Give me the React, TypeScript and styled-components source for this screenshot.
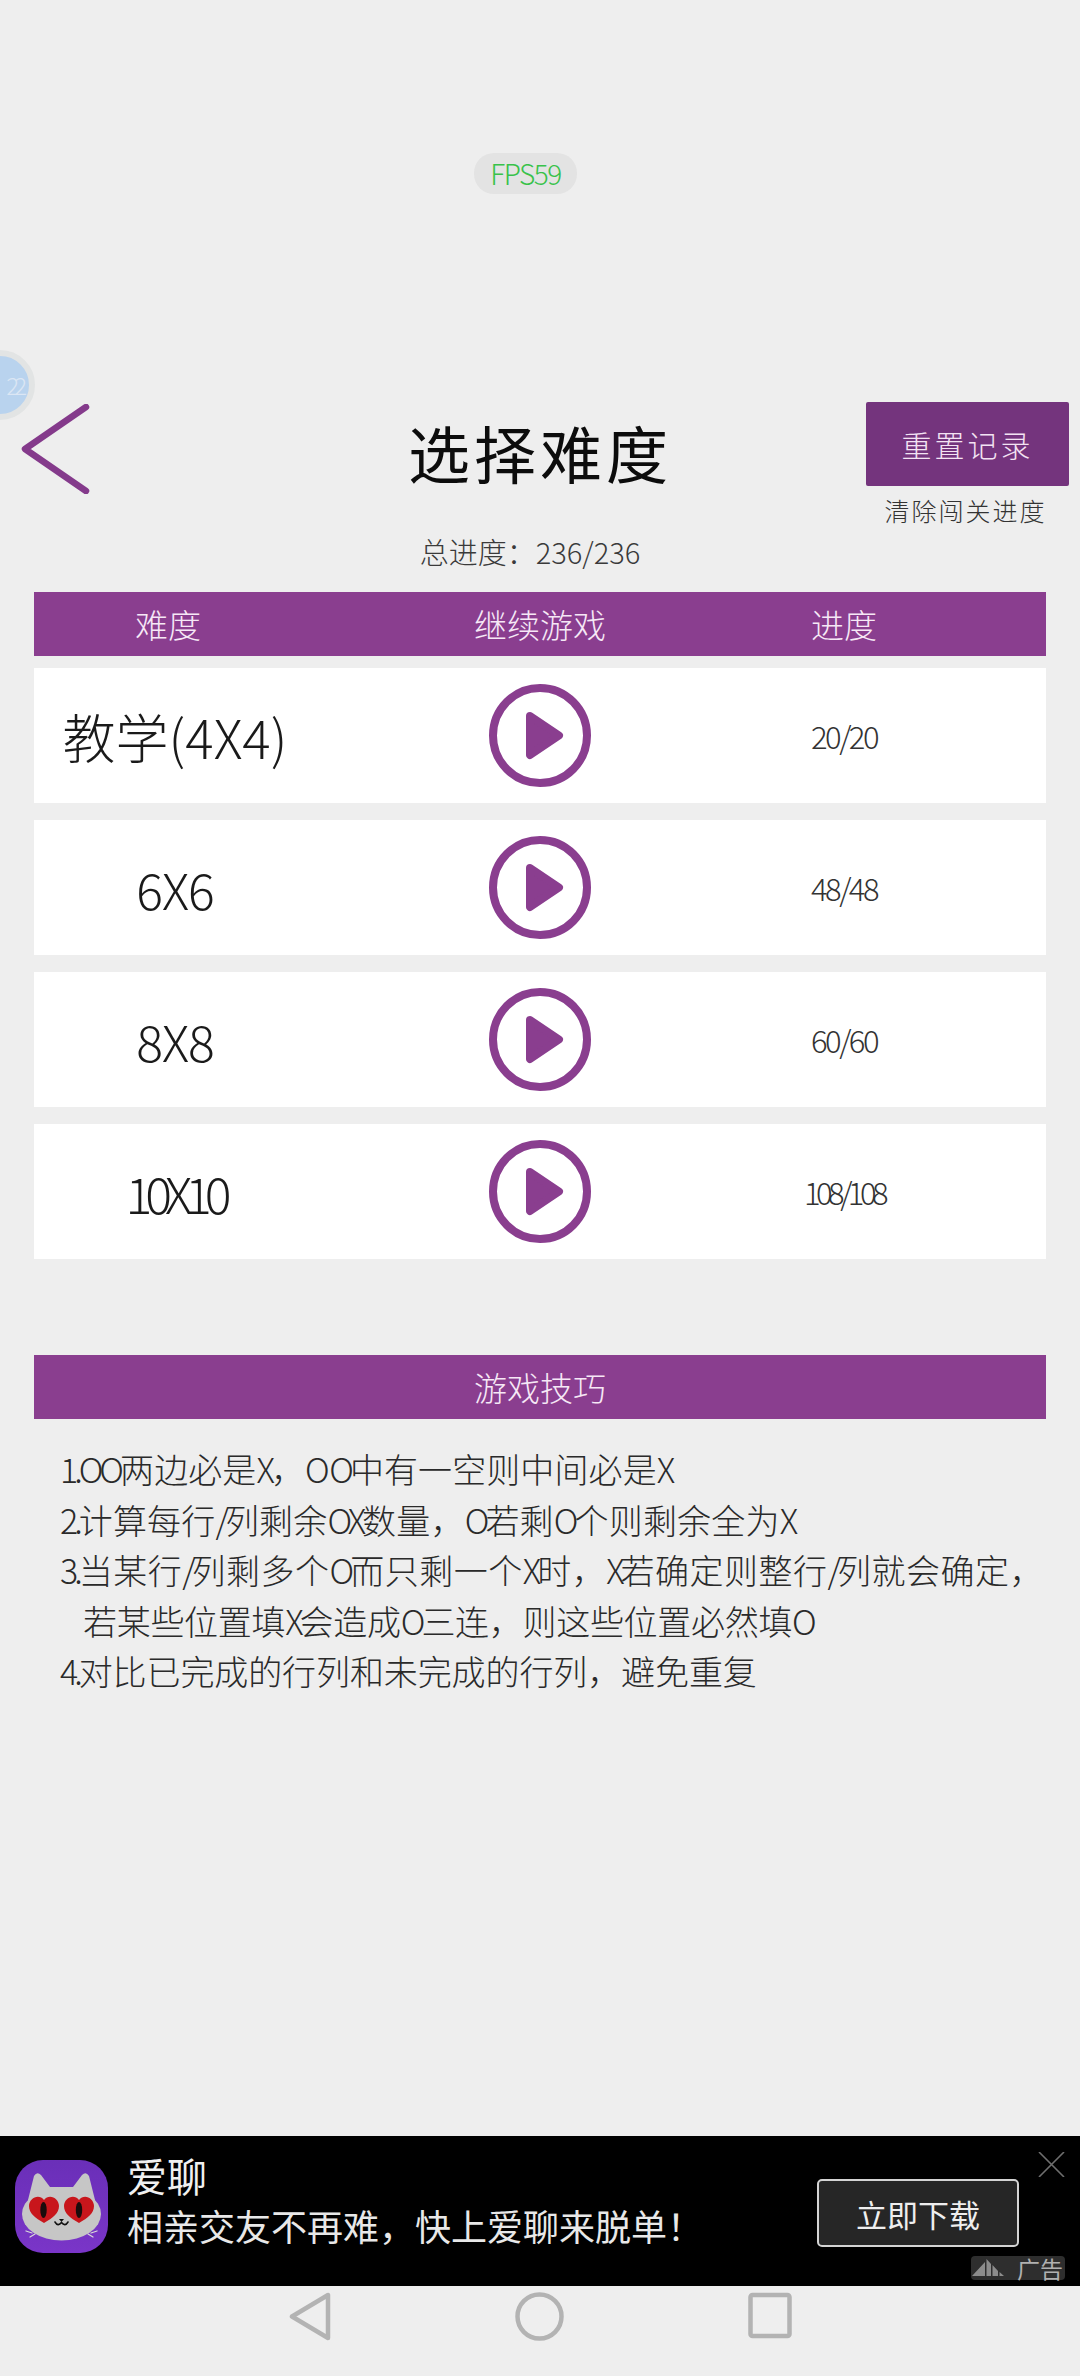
import styled, { createGlobalStyle } from "styled-components";

const HAND = '"Noto Sans CJK SC", sans-serif';
const PURPLE = "#8a3e8f";

const GlobalStyle = createGlobalStyle`
  html, body {
    margin: 0;
    padding: 0;
    background: #eeeeee;
  }
`;

const Page = styled.div`
  position: relative;
  width: 1080px;
  height: 2376px;
  display: flex;
  flex-direction: column;
  overflow: hidden;
  background: #eeeeee;
  font-family: ${HAND};
  font-weight: 300;
  color: #222222;
`;

const FpsPill = styled.div`
  align-self: center;
  width: 103px;
  height: 41px;
  margin: 153px 29px 0 0;
  border-radius: 20px;
  background: #e3e3e3;
  color: #38c24a;
  font-size: 28px;
  line-height: 41px;
  letter-spacing: -1.5px;
  text-align: center;
`;

const FloatBall = styled.div`
  position: absolute;
  left: -35px;
  top: 350px;
  width: 70px;
  height: 70px;
  box-sizing: border-box;
  padding-right: 7px;
  border: 6px solid #e2e4e4;
  border-radius: 50%;
  background: #b9d3ee;
  color: #dbe6f4;
  font-size: 24px;
  line-height: 58px;
  letter-spacing: -5px;
  text-align: right;
`;

const TopBar = styled.div`
  display: grid;
  grid-template-columns: 1fr auto 1fr;
  height: 130px;
  margin-top: 208px;
  padding: 0 11px;
`;

const BackIcon = styled.svg`
  width: 72px;
  height: 90px;
  margin: 2px 0 0 10px;
`;

const Title = styled.h1`
  margin: 12px 0 0;
  font-size: 62px;
  line-height: 76px;
  font-weight: 400;
  letter-spacing: 4px;
  color: #0c0c0c;
`;

const ResetColumn = styled.div`
  justify-self: end;
  width: 203px;
  display: flex;
  flex-direction: column;
  align-items: center;
`;

const ResetButton = styled.button`
  width: 203px;
  height: 84px;
  border: 0;
  border-radius: 2px;
  padding: 0;
  background: #74347d;
  color: #f3e3f3;
  font-family: ${HAND};
  font-weight: 300;
  font-size: 30px;
  letter-spacing: 3px;
`;

const ResetHint = styled.div`
  margin: 9px 0 0 -4px;
  font-size: 25px;
  line-height: 30px;
  letter-spacing: 2px;
  color: #333333;
`;

const TotalProgress = styled.div`
  margin-right: 20px;
  height: 60px;
  font-size: 29px;
  line-height: 38px;
  text-align: center;
  color: #3a3a3a;
`;

const Table = styled.section`
  display: flex;
  flex-direction: column;
  gap: 17px;
  margin: 0 34px;
`;

const TableHead = styled.div`
  display: grid;
  grid-template-columns: 268px 476px 132px;
  justify-items: center;
  align-items: center;
  height: 64px;
  margin-bottom: -5px;
  background: ${PURPLE};
  color: #f6e8f6;
  font-size: 33px;
`;

const Row = styled.div`
  display: grid;
  grid-template-columns: 282px 448px 160px;
  justify-items: center;
  align-items: center;
  height: 135px;
  background: #ffffff;
`;

const LevelName = styled.div<{ $size: number; $tight: number }>`
  font-size: ${(p) => p.$size}px;
  letter-spacing: ${(p) => p.$tight}px;
  color: #1a1a1a;
`;

const Count = styled.div<{ $tight: number }>`
  font-size: 31px;
  letter-spacing: ${(p) => p.$tight}px;
  color: #333333;
`;

const PlayIcon = styled.svg`
  width: 102px;
  height: 103px;
`;

const TipsHead = styled.div`
  height: 64px;
  margin: 96px 34px 0;
  background: ${PURPLE};
  color: #f6e8f6;
  font-size: 33px;
  line-height: 64px;
  text-align: center;
`;

const TipList = styled.div`
  margin: 25px 34px 0;
  padding-left: 26px;
  font-size: 34px;
  color: #2a2a2a;
`;

const Tip = styled.div<{ $indent?: boolean; $spacing: number }>`
  height: 50.5px;
  line-height: 50.5px;
  white-space: nowrap;
  letter-spacing: ${(p) => p.$spacing}px;
  padding-left: ${(p) => (p.$indent ? "23px" : "0")};
`;

const Latin = styled.span`
  letter-spacing: -4px;
`;

const AdBar = styled.div`
  position: relative;
  display: flex;
  align-items: flex-start;
  height: 150px;
  margin-top: auto;
  padding-left: 15px;
  background: #000000;
  font-family: "Noto Sans CJK SC", sans-serif;
  font-weight: 400;
`;

const AdIcon = styled.svg`
  width: 93px;
  height: 93px;
  margin-top: 24px;
  flex: none;
`;

const AdText = styled.div`
  margin: 14px 0 0 19px;
  display: flex;
  flex-direction: column;
`;

const AdName = styled.div`
  font-size: 40px;
  line-height: 50px;
  color: #f0f0f0;
`;

const AdSlogan = styled.div`
  font-size: 36px;
  line-height: 50px;
  color: #e8e8e8;
`;

const AdButton = styled.button`
  width: 202px;
  height: 68px;
  margin: 43px 61px 0 auto;
  padding: 0;
  border: 2px solid #d4d4d4;
  border-radius: 5px;
  background: #262626;
  color: #eeeeee;
  font-family: "Noto Sans CJK SC", sans-serif;
  font-size: 31px;
`;

const AdClose = styled.svg`
  position: absolute;
  right: 15px;
  top: 16px;
  width: 27px;
  height: 25px;
`;

const AdBadge = styled.div`
  position: absolute;
  right: 15px;
  bottom: 6px;
  display: flex;
  align-items: center;
  gap: 4px;
  width: 94px;
  height: 24px;
  border-radius: 4px;
  background: #2e2e2e;
  color: #b0b0b0;
  font-size: 23px;
  line-height: 24px;
`;

const NavBar = styled.nav`
  display: flex;
  justify-content: center;
  align-items: flex-start;
  gap: 184px;
  height: 90px;
  padding-top: 6px;
  box-sizing: border-box;
  background: #eeeeee;
`;

const NavIcon = styled.svg<{ $width: number }>`
  width: ${(p) => p.$width}px;
  height: 49px;
`;

const levels = [
  { name: "教学(4X4)", size: 53, tight: 0, count: "20/20", countTight: -2.5 },
  { name: "6X6", size: 50, tight: -1, count: "48/48", countTight: -2.5 },
  { name: "8X8", size: 50, tight: -1, count: "60/60", countTight: -2.5 },
  { name: "10X10", size: 50, tight: -7, count: "108/108", countTight: -4.5 },
];

const tips = [
  { text: "1.OO两边必是X，O O中有一空则中间必是X", spacing: 0.1 },
  { text: "2.计算每行/列剩余OX数量，O若剩O个则剩余全为X", spacing: 0.2 },
  { text: "3.当某行/列剩多个O而只剩一个X时，X若确定则整行/列就会确定，", spacing: 0.5 },
  { text: "若某些位置填X会造成O三连，则这些位置必然填O", spacing: -0.3, indent: true },
  { text: "4.对比已完成的行列和未完成的行列，避免重复", spacing: -0.1 },
];

// the latin letters in these lines are much narrower than the CJK ones
const tipParts = (text: string) =>
  text.split(/([A-Za-z0-9./ ]+)/).map((part, i) =>
    i % 2 === 1 ? <Latin key={i}>{part}</Latin> : part
  );

const PlayGlyph = () => (
  <PlayIcon viewBox="0 0 102 103">
    <ellipse cx="51" cy="51.5" rx="47" ry="47.5" fill="none" stroke={PURPLE} strokeWidth="8" />
    <path d="M41 32 L70 51.5 L41 71 Z" fill={PURPLE} stroke={PURPLE} strokeWidth="8" strokeLinejoin="round" />
  </PlayIcon>
);

const CatIcon = () => (
  <AdIcon viewBox="0 0 93 93">
    <defs>
      <linearGradient id="catBg" x1="0" y1="0" x2="0" y2="1">
        <stop offset="0" stopColor="#6a2fb8" />
        <stop offset="1" stopColor="#7a35c8" />
      </linearGradient>
    </defs>
    <rect width="93" height="93" rx="28" fill="url(#catBg)" />
    <path d="M13 40 L19 16 Q22 11 26 15 L35 27 H58 L67 15 Q71 11 74 16 L80 40 Z" fill="#c6c6c6" />
    <ellipse cx="46.5" cy="54" rx="39.5" ry="26.5" fill="#c6c6c6" />
    <path d="M29 63 C20 58 14 53 14 46 C14 38 24 33 29 40 C34 33 44 38 44 46 C44 53 38 58 29 63 Z" fill="#c8161c" />
    <path d="M64 63 C55 58 49 53 49 46 C49 38 59 33 64 40 C69 33 79 38 79 46 C79 53 73 58 64 63 Z" fill="#c8161c" />
    <ellipse cx="28.5" cy="50" rx="3.2" ry="8" fill="#1a0c0c" />
    <ellipse cx="64" cy="50" rx="3.2" ry="8" fill="#1a0c0c" />
    <path d="M44 59 H49 L46.5 62 Z" fill="#111111" />
    <path d="M40 62 Q43 67 46.5 62.5 Q50 67 53 62" fill="none" stroke="#111111" strokeWidth="1.6" strokeLinecap="round" />
    <path d="M11 71 L17 73 M15 77 L20 74 M82 71 L76 73 M78 77 L73 74" stroke="#d8d8d8" strokeWidth="1.3" strokeLinecap="round" />
  </AdIcon>
);

export default function App() {
  return (
    <Page>
      <GlobalStyle />
      <FpsPill>FPS59</FpsPill>
      <FloatBall>22</FloatBall>

      <TopBar>
        <BackIcon viewBox="0 0 72 90">
          <path d="M65 3 L4 45 L65 87" fill="none" stroke="#843a8b" strokeWidth="6.5" strokeLinecap="round" strokeLinejoin="round" />
        </BackIcon>
        <Title>选择难度</Title>
        <ResetColumn>
          <ResetButton>重置记录</ResetButton>
          <ResetHint>清除闯关进度</ResetHint>
        </ResetColumn>
      </TopBar>

      <TotalProgress>总进度：236/236</TotalProgress>

      <Table>
        <TableHead>
          <div>难度</div>
          <div>继续游戏</div>
          <div>进度</div>
        </TableHead>
        {levels.map((level) => (
          <Row key={level.name}>
            <LevelName $size={level.size} $tight={level.tight}>{level.name}</LevelName>
            <PlayGlyph />
            <Count $tight={level.countTight}>{level.count}</Count>
          </Row>
        ))}
      </Table>

      <TipsHead>游戏技巧</TipsHead>
      <TipList>
        {tips.map((tip) => (
          <Tip key={tip.text} $indent={tip.indent} $spacing={tip.spacing}>{tipParts(tip.text)}</Tip>
        ))}
      </TipList>

      <AdBar>
        <CatIcon />
        <AdText>
          <AdName>爱聊</AdName>
          <AdSlogan>相亲交友不再难，快上爱聊来脱单！</AdSlogan>
        </AdText>
        <AdButton>立即下载</AdButton>
        <AdClose viewBox="0 0 27 25">
          <path d="M1 0 L26 25 M26 0 L1 25" stroke="#6e6e6e" strokeWidth="1.6" />
        </AdClose>
        <AdBadge>
          <svg width="42" height="24" viewBox="0 0 42 24">
            <path d="M1 20 L14 6 V20 Z M15.5 20 V3 L20 8 V20 Z M21.5 20 V9 L27 15 V20 Z M28.5 20 V16 L33 20 Z" fill="#8c8c8c" />
          </svg>
          广告
        </AdBadge>
      </AdBar>

      <NavBar>
        <NavIcon $width={42} viewBox="0 0 42 49">
          <path d="M39 3 V46 L3 24.5 Z" fill="none" stroke="#b3b3b3" strokeWidth="4.5" strokeLinejoin="round" />
        </NavIcon>
        <NavIcon $width={49} viewBox="0 0 49 49">
          <circle cx="24.5" cy="24.5" r="22" fill="none" stroke="#b3b3b3" strokeWidth="4.5" />
        </NavIcon>
        <NavIcon $width={44} viewBox="0 0 44 49">
          <rect x="2.5" y="3" width="39" height="41" rx="2" fill="none" stroke="#b3b3b3" strokeWidth="4.5" />
        </NavIcon>
      </NavBar>
    </Page>
  );
}
